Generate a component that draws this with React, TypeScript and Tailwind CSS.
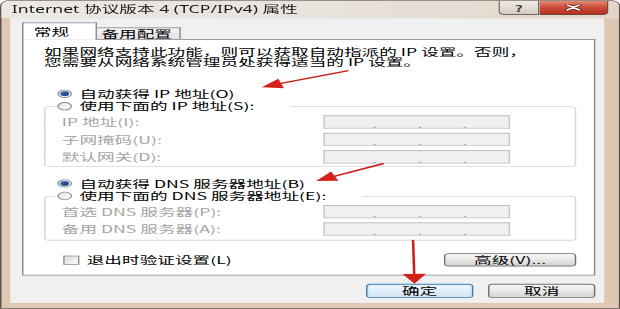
import React from "react";

// The reference is a stretched screenshot: the dialog is laid out at its own size
// and scaled (x 1.47, y 0.83) so glyphs and boxes stretch like the picture.

const Radio = ({ checked = false }: { checked?: boolean }) => (
  <span className="flex h-[10px] w-[10px] shrink-0 items-center justify-center rounded-full border border-[#8b939c] bg-linear-to-br from-[#dfe3e7] to-white">
    {checked && <span className="h-[6px] w-[6px] rounded-full bg-linear-to-br from-[#3a6fb5] to-[#173f78]" />}
  </span>
);

const IpBox = () => (
  <div className="flex h-[16px] w-[127px] items-center border border-[#c8c8c8] border-t-[#b4b4b4] bg-[#f0f0f0] pl-[5px] pr-[1px] text-[#9b9b9b]">
    <span className="flex-1" />
    <span className="w-[4px] pt-[3px] text-center">.</span>
    <span className="flex-1" />
    <span className="w-[4px] pt-[3px] text-center">.</span>
    <span className="flex-1" />
    <span className="w-[4px] pt-[3px] text-center">.</span>
    <span className="flex-1" />
  </div>
);

const IpRow = ({ label }: { label: string }) => (
  <div className="flex h-[16px] items-center">
    <span className="w-[178px] text-[#a4a4a4]">{label}</span>
    <IpBox />
  </div>
);

const Group = ({ legend, rows, pb }: { legend: string; rows: string[]; pb: string }) => (
  <fieldset className={`mt-[3px] rounded-[3px] border border-[#d6d6d6] pl-[11px] pt-[5px] ${pb}`}>
    <legend className="-ml-[3px] h-[12px] pr-[24px]">
      <span className="flex items-center gap-[5px]">
        <Radio />
        <span>{legend}</span>
      </span>
    </legend>
    <div className="flex flex-col gap-[5px]">
      {rows.map((r) => (
        <IpRow key={r} label={r} />
      ))}
    </div>
  </fieldset>
);

const arrow = (x1: number, y1: number, x2: number, y2: number, len: number, half: number) => {
  const d = Math.hypot(x2 - x1, y2 - y1);
  const ux = (x2 - x1) / d;
  const uy = (y2 - y1) / d;
  const bx = x2 - ux * len;
  const by = y2 - uy * len;
  const px = -uy * half;
  const py = ux * half;
  return (
    <g key={`${x1}-${y1}`}>
      <line x1={x1} y1={y1} x2={bx + ux * 2} y2={by + uy * 2} stroke="#c81e18" strokeWidth={1.7} />
      <polygon points={`${x2},${y2} ${bx + px},${by + py} ${bx - px},${by - py}`} fill="#d4221b" />
    </g>
  );
};

export default function App() {
  return (
    <div className="relative h-[309px] w-[620px] overflow-hidden bg-white">
      <div className="relative h-[372px] w-[422px] origin-top-left scale-x-[1.47] scale-y-[0.83] font-['Noto_Sans_CJK_SC',sans-serif] text-[12px] leading-[12px] text-black">
        <div className="flex h-full flex-col rounded-t-[7px] border border-[#5a514b] bg-[#dec8b3]">
          {/* title bar */}
          <div className="flex h-[21px] shrink-0 items-start rounded-t-[6px] bg-linear-to-r from-[#ece8e4] via-[#e8e3dd] to-[#e2d6ca]">
            <span className="pl-[7px] pt-[5px] font-['Noto_Sans','Noto_Sans_CJK_SC',sans-serif] text-[#1c1c1c]">
              Internet 协议版本 4 (TCP/IPv4) 属性
            </span>
            <div className="ml-auto mr-[7px] flex">
              <div className="flex h-[17px] w-[28px] items-center justify-center rounded-bl-[4px] border border-t-0 border-[#6a605a] bg-linear-to-b from-[#f1ece7] to-[#d6cbc1] text-[11px] font-bold text-[#3c3c3c]">
                ?
              </div>
              <div className="flex h-[17px] w-[47px] items-center justify-center rounded-br-[4px] border border-l-0 border-t-0 border-[#6a3a30] bg-linear-to-b from-[#e58a76] via-[#cc4c36] to-[#b7301f]">
                <svg width="12" height="8" viewBox="0 0 12 8">
                  <path d="M2 1 L10 7 M10 1 L2 7" stroke="#5b1810" strokeWidth="3.4" strokeLinecap="round" />
                  <path d="M2 1 L10 7 M10 1 L2 7" stroke="#ffffff" strokeWidth="1.8" strokeLinecap="round" />
                </svg>
              </div>
            </div>
          </div>

          {/* client area */}
          <div className="mb-[6px] ml-[6px] mr-[10px] flex flex-1 flex-col bg-[#f0f0f0] pl-[8px] pr-[6px] pt-[5px]">
            <div className="flex items-end">
              <div className="relative z-10 -mb-px flex h-[21px] w-[51px] items-center border border-b-0 border-[#898c95] bg-white pl-[7px]">
                常规
              </div>
              <div className="flex h-[14px] w-[57px] items-center border border-b-0 border-l-0 border-[#898c95] bg-linear-to-b from-[#f4f4f4] to-[#e3e3e3] pl-[3px]">
                备用配置
              </div>
            </div>

            <div className="flex flex-col border border-[#898c95] bg-white pb-[10px] pl-[14px] pr-[12px] pt-[8px]">
              <p>如果网络支持此功能，则可以获取自动指派的 IP 设置。否则，</p>
              <p>您需要从网络系统管理员处获得适当的 IP 设置。</p>

              <div className="ml-[9px] mt-[27px] flex h-[12px] items-center gap-[5px]">
                <Radio checked />
                <span>自动获得 IP 地址(O)</span>
              </div>
              <Group legend="使用下面的 IP 地址(S):" rows={["IP 地址(I):", "子网掩码(U):", "默认网关(D):"]} pb="pb-[3px]" />

              <div className="ml-[9px] mt-[14px] flex h-[12px] items-center gap-[5px]">
                <Radio checked />
                <span>自动获得 DNS 服务器地址(B)</span>
              </div>
              <Group legend="使用下面的 DNS 服务器地址(E):" rows={["首选 DNS 服务器(P):", "备用 DNS 服务器(A):"]} pb="pb-[5px]" />

              <div className="mt-[15px] flex h-[16px] items-center justify-between">
                <div className="ml-[13px] flex items-center gap-[5px]">
                  <span className="h-[11px] w-[11px] border border-[#8f9091] bg-linear-to-br from-[#dadada] to-white" />
                  <span>退出时验证设置(L)</span>
                </div>
                <button className="h-[16px] w-[90px] rounded-[3px] border border-[#707070] bg-linear-to-b from-[#f6f6f6] via-[#e8e8e8] to-[#d3d3d3] leading-[12px]">
                  高级(V)...
                </button>
              </div>
            </div>

            <div className="mt-[10px] flex justify-end gap-[10px]">
              <button className="h-[17px] w-[73px] rounded-[3px] border border-[#3c7fb1] bg-linear-to-b from-[#f1f8fd] via-[#e0eef8] to-[#cfe4f3] leading-[12px] shadow-[inset_0_0_0_1px_#cde8fb]">
                确定
              </button>
              <button className="h-[17px] w-[73px] rounded-[3px] border border-[#707070] bg-linear-to-b from-[#f6f6f6] via-[#e8e8e8] to-[#d3d3d3] leading-[12px]">
                取消
              </button>
            </div>
          </div>
        </div>

        {/* red annotation arrows */}
        <svg className="pointer-events-none absolute left-0 top-0 h-[372px] w-[422px]" viewBox="0 0 422 372">
          {arrow(237, 85, 178, 105, 14, 6)}
          {arrow(261, 197, 215, 218, 14, 6)}
          {arrow(281, 289, 282, 342, 12, 8)}
        </svg>
      </div>
    </div>
  );
}
